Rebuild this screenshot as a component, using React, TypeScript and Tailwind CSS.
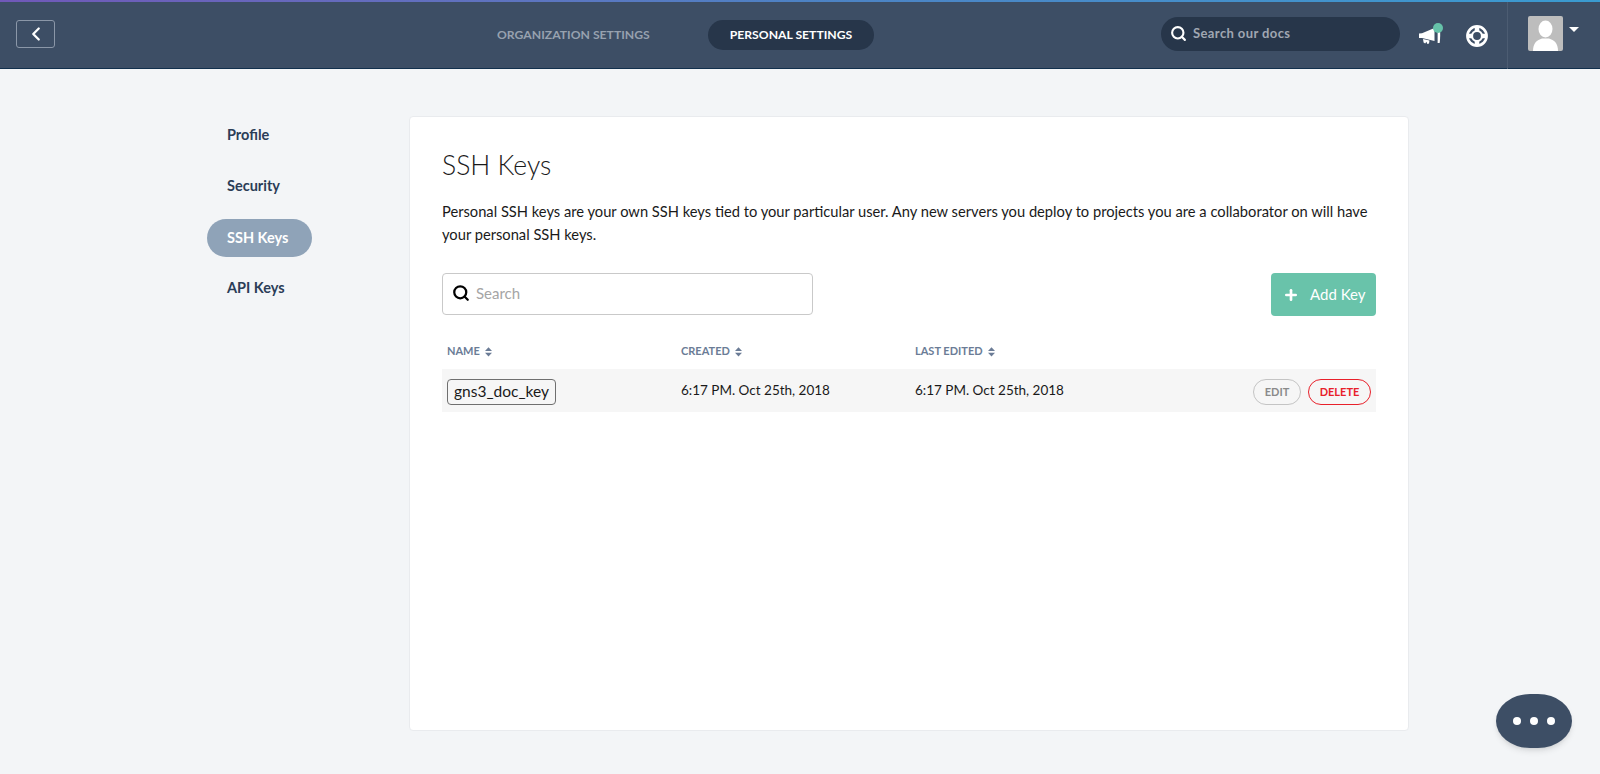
import React from "react";
import { Search, ChevronLeft, Plus } from "lucide-react";

const sideItems = ["Profile", "Security", "SSH Keys", "API Keys"];

function SortIcon() {
  return (
    <svg width="7" height="10" viewBox="0 0 8 11" className="ml-[5px]">
      <path d="M4 0 L8 4.3 H0 Z M0 6.4 H8 L4 10.7 Z" fill="#6b7c96" />
    </svg>
  );
}

function Megaphone() {
  return (
    <svg width="24" height="20" viewBox="0 0 24 20" fill="white">
      <path d="M0 7.5 L3 7.2 L15.5 2 V15 L3 12 L0 12 Z" />
      <path d="M4 13 L10.5 14.4 L10 17.6 L8.4 18 L7.4 15.8 L6.2 17.4 L4.6 16.6 Z" />
      <path d="M18.6 1 H20.6 C21.4 5 21.4 12 20.6 17 H18.6 Z" />
    </svg>
  );
}

function LifeRing() {
  return (
    <svg width="24" height="24" viewBox="0 0 24 24" fill="none" stroke="white">
      <circle cx="12" cy="12" r="9.6" strokeWidth="2.6" />
      <circle cx="12" cy="12" r="5" strokeWidth="2.2" />
      <path d="M12 2 V7 M12 17 V22 M2 12 H7 M17 12 H22" strokeWidth="4.5" />
    </svg>
  );
}

function Avatar() {
  return (
    <div className="w-[35px] h-[35px] bg-[#bdbdbd] rounded-[2px] overflow-hidden">
      <svg width="35" height="35" viewBox="0 0 35 35" fill="white">
        <ellipse cx="17.5" cy="13" rx="7" ry="8.5" />
        <path d="M5 35 C5 27 9 24 14 22.5 H21 C26 24 30 27 30 35 Z" />
      </svg>
    </div>
  );
}

function Header() {
  return (
    <header className="h-[69px] bg-[#3d4e65] border-b border-[#12304d] flex flex-col">
      <div className="h-[2px] shrink-0 bg-gradient-to-r from-[#7058b8] via-[#4d82c4] to-[#3a9bd0]" />
      <div className="flex-1 flex items-start">
        <button className="ml-4 mt-[18px] w-[39px] h-[28px] border border-[#8b97a8] rounded-[3px] flex items-center justify-center text-white">
          <ChevronLeft size={22} strokeWidth={2.5} />
        </button>
        <div className="ml-[442px] mt-[18px] h-[30px] flex items-center text-[12.2px] font-bold font-['Lato',sans-serif]">
          <span className="text-[#97a1af] w-[211px]">ORGANIZATION SETTINGS</span>
          <span className="h-[30px] w-[166px] rounded-full bg-[#27364a] text-white flex items-center justify-center">PERSONAL SETTINGS</span>
        </div>
        <div className="ml-[287px] mt-[15px] w-[239px] h-[34px] rounded-full bg-[#27364a] flex items-center pl-[9px] pb-[1px] text-[#a0a7b2] text-[13px] font-bold tracking-[0.4px] font-['Lato',sans-serif]">
          <Search size={17} strokeWidth={3} className="text-white mr-[6px]" />
          Search our docs
        </div>
        <div className="relative ml-[19px] mt-[24px]">
          <Megaphone />
          <span className="absolute left-[14px] -top-[3px] w-[10px] h-[10px] rounded-full bg-[#66c2a9]" />
        </div>
        <div className="ml-[22px] mt-[22px]">
          <LifeRing />
        </div>
        <div className="ml-[18px] h-[67px] border-l border-[#4c5c72] pl-[20px] pt-[14px] flex items-start">
          <Avatar />
          <span className="ml-[6px] mt-[11px] w-0 h-0 border-l-[5px] border-r-[5px] border-t-[5px] border-l-transparent border-r-transparent border-t-white" />
        </div>
      </div>
    </header>
  );
}

function Sidebar() {
  return (
    <nav className="w-[202px] flex flex-col gap-[13px]">
      {sideItems.map((item) => (
        <div
          key={item}
          className={
            item === "SSH Keys"
              ? "h-[38px] w-[105px] translate-y-px rounded-full bg-[#8fa3b8] text-white flex items-center pl-[20px] text-[14.5px] font-bold"
              : "h-[38px] flex items-center pl-[20px] text-[14.5px] font-bold text-[#2b3d57]"
          }
        >
          {item}
        </div>
      ))}
    </nav>
  );
}

function KeysTable() {
  return (
    <div className="mt-[24px]">
      <div className="h-[29px] pb-[6px] pl-[5px] grid grid-cols-[234px_234px_1fr] items-center text-[11px] font-bold text-[#6b7c96]">
        <span className="flex items-center">NAME<SortIcon /></span>
        <span className="flex items-center">CREATED<SortIcon /></span>
        <span className="flex items-center">LAST EDITED<SortIcon /></span>
      </div>
      <div className="h-[43px] pl-[5px] pr-[5px] bg-[#f6f6f6] grid grid-cols-[234px_234px_1fr] items-center text-[13.5px] text-[#1a1a1a]">
        <span>
          <span className="inline-flex items-center justify-center w-[109px] h-[26px] mt-[3px] border border-[#6f6f6f] rounded-[4px] text-[15.5px]">gns3_doc_key</span>
        </span>
        <span>6:17 PM. Oct 25th, 2018</span>
        <div className="flex items-center justify-between">
          <span>6:17 PM. Oct 25th, 2018</span>
          <div className="flex items-center gap-[7px] mt-[3px]">
            <span className="w-[48px] h-[26px] rounded-full border border-[#c4c4c4] text-[#8a8a8a] text-[11px] font-bold flex items-center justify-center">EDIT</span>
            <span className="w-[63px] h-[26px] rounded-full border border-[#e8202a] text-[#e8202a] text-[11px] font-bold flex items-center justify-center">DELETE</span>
          </div>
        </div>
      </div>
    </div>
  );
}

function Card() {
  return (
    <main className="w-[1000px] h-[615px] bg-white rounded-[4px] border border-[#e9ebee] pl-[32px] pr-[32px] pt-[32px] text-[#1a1a1a]">
      <h1 className="text-[26.5px] leading-[32px] font-light">SSH Keys</h1>
      <p className="mt-[19px] text-[14.7px] leading-[23px] w-[934px]">
        Personal SSH keys are your own SSH keys tied to your particular user. Any new servers you deploy to projects you are a collaborator on will have your personal SSH keys.
      </p>
      <div className="mt-[27px] flex items-start justify-between">
        <div className="w-[371px] h-[42px] border border-[#c9c9c9] rounded-[4px] flex items-center pl-[9px] pb-[2px] text-[15px] text-[#a5a5a5]">
          <Search size={18} strokeWidth={3} className="text-black mr-[6px]" />
          Search
        </div>
        <button className="w-[105px] h-[43px] bg-[#69c3aa] rounded-[4px] text-white text-[15px] flex items-center pl-[12px]">
          <Plus size={16} strokeWidth={4} className="mr-[11px]" />
          Add Key
        </button>
      </div>
      <KeysTable />
    </main>
  );
}

export default function App() {
  return (
    <div className="relative min-h-screen bg-[#f3f5f7] font-['Lato',sans-serif]">
      <Header />
      <div className="flex pl-[207px] pt-[47px]">
        <Sidebar />
        <Card />
      </div>
      <div className="absolute left-[1496px] top-[694px] w-[76px] h-[54px] rounded-[34px/27px] bg-[#3d4e65] shadow-md flex items-center justify-center gap-[9px]">
        <span className="w-2 h-2 rounded-full bg-white" />
        <span className="w-2 h-2 rounded-full bg-white" />
        <span className="w-2 h-2 rounded-full bg-white" />
      </div>
    </div>
  );
}
